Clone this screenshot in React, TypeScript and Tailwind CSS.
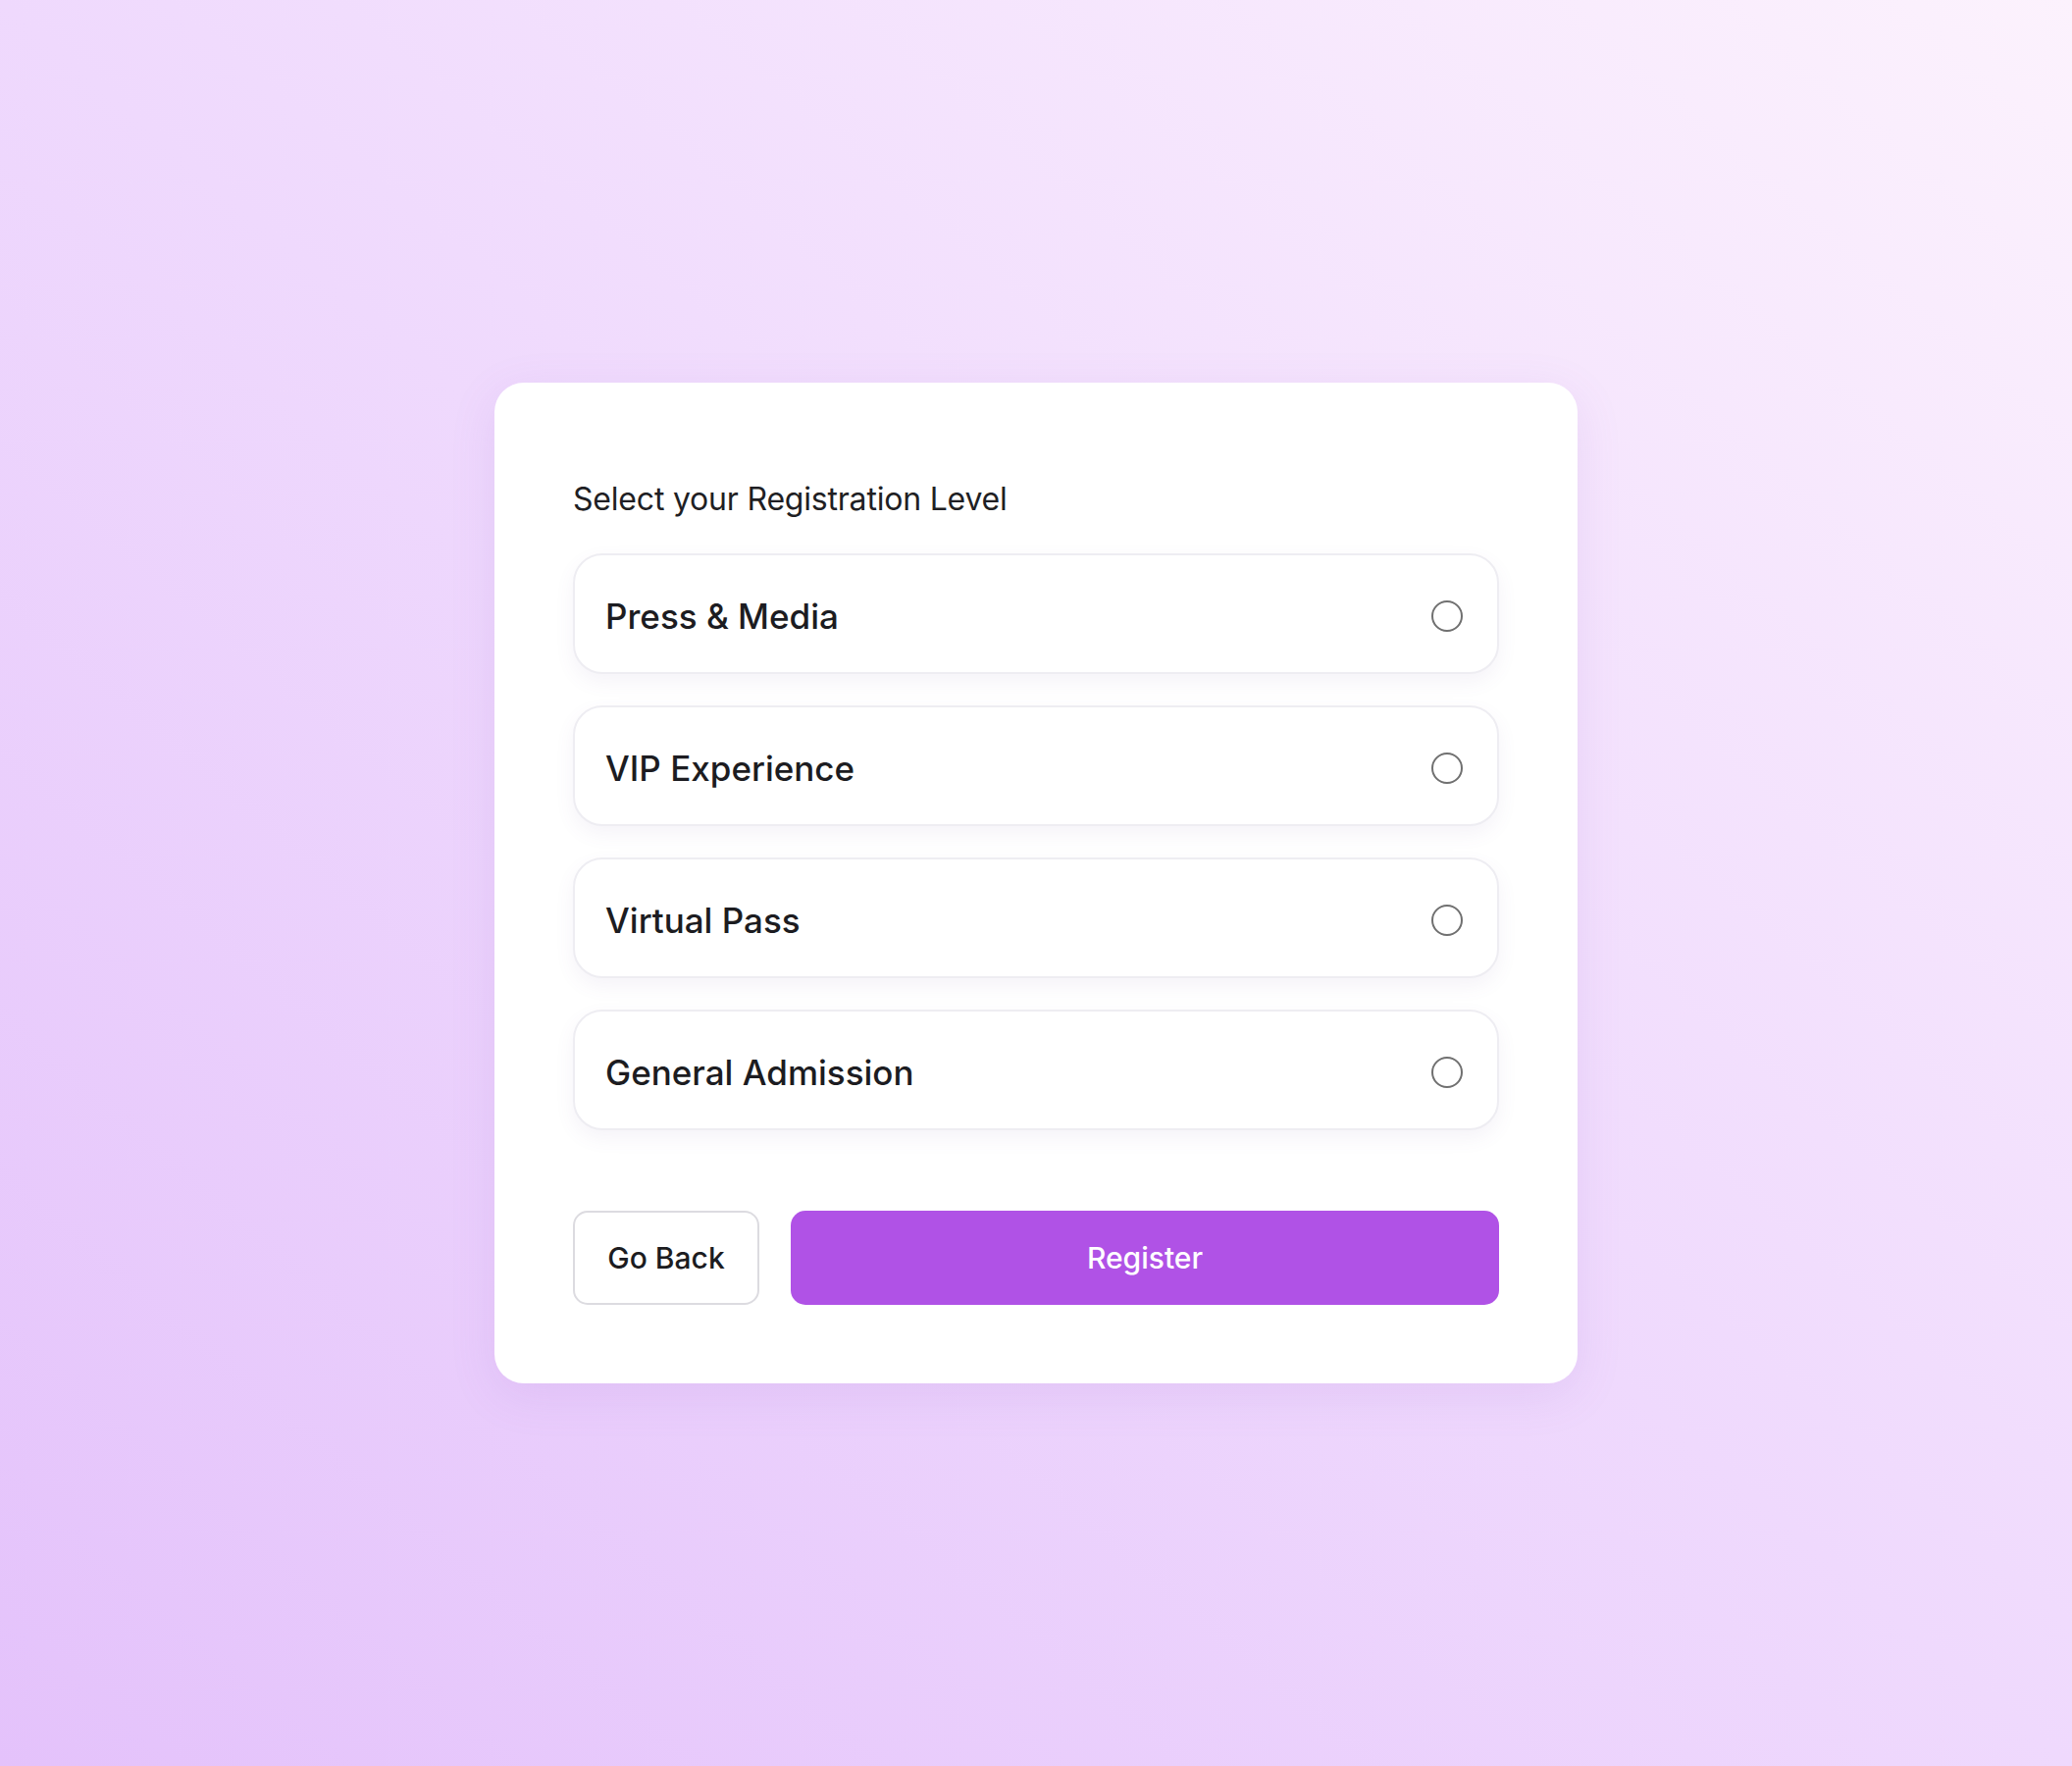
import React from "react";

const options = ["Press & Media", "VIP Experience", "Virtual Pass", "General Admission"];

export default function App() {
  return (
    <div className="flex h-[1800px] w-full items-center justify-center bg-[linear-gradient(to_top_right,#e4c2fb_0%,#efd9fd_50%,#fcf2fd_100%)] font-['Inter',sans-serif]">
      <div className="flex w-[1104px] flex-col rounded-[30px] bg-white px-[80px] pt-[101px] pb-[80px] shadow-[0_12px_48px_rgba(150,90,200,0.12)]">
        <h1 className="text-[32px] leading-[36px] font-normal tracking-[-0.2px] text-[#1f1f24]">
          Select your Registration Level
        </h1>
        <div className="mt-[37px] flex flex-col gap-[32px]">
          {options.map((o) => (
            <label
              key={o}
              className="flex h-[123px] cursor-pointer items-center justify-between rounded-[30px] border-2 border-[#eeedf2] bg-white pt-[4px] pl-[31px] pr-[35px] shadow-[0_8px_20px_rgba(110,90,150,0.07)]"
            >
              <span className="text-[35px] font-medium leading-[44px] text-[#1c1c21]">{o}</span>
              <span className="block h-[32px] w-[32px] rounded-full border-[2.5px] border-[#707070]" />
            </label>
          ))}
        </div>
        <div className="mt-[82px] flex gap-[32px]">
          <button className="h-[96px] w-[190px] rounded-[15px] border-2 border-[#dcdbe0] bg-white text-[30px] font-medium text-[#1c1c21]">
            Go Back
          </button>
          <button className="h-[96px] flex-1 rounded-[15px] bg-[#b052e6] text-[30px] font-medium text-white">
            Register
          </button>
        </div>
      </div>
    </div>
  );
}
